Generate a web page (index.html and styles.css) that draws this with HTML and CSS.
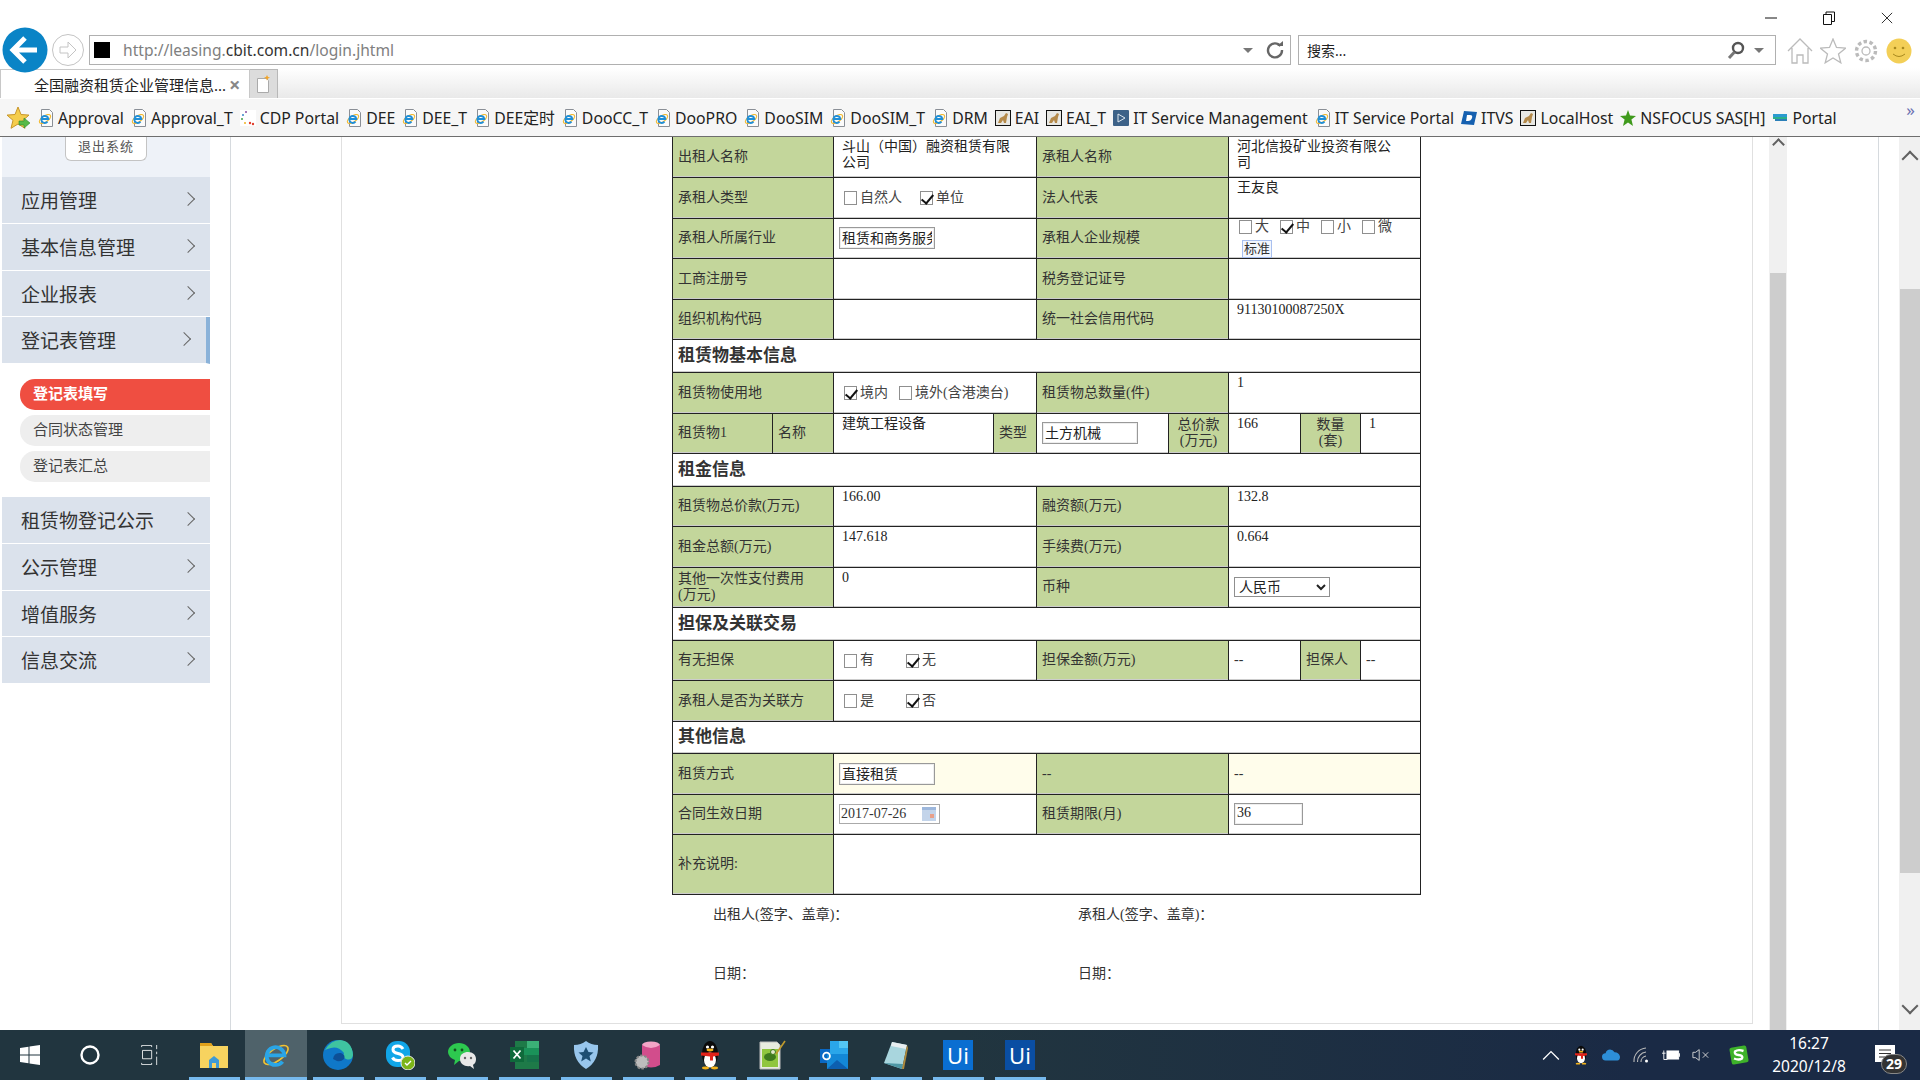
FILE: index.html
```html
<!DOCTYPE html>
<html lang="zh-CN">
<head>
    <meta charset="UTF-8">
    <title>全国融资租赁企业管理信息系统</title>
    <link rel="stylesheet" href="styles.css">
</head>
<body>
    <!-- shared icons -->
    <svg class="defs">
        <symbol id="ie" viewBox="0 0 32 32">
            <ellipse cx="16" cy="16" rx="15" ry="6.5" transform="rotate(-35 16 16)" fill="none" stroke="#f2c230" stroke-width="1.8"/>
            <path d="M8 16.5h17A9.5 9.5 0 1 0 23 23" fill="none" stroke="#2aa5e6" stroke-width="4"/>
        </symbol>
        <symbol id="iefile" viewBox="0 0 16 18">
            <path d="M3.5 .5h8l3 3v14h-11z" fill="#fbfbfb" stroke="#8a8f96"/>
            <ellipse cx="7" cy="10" rx="6.5" ry="3" transform="rotate(-35 7 10)" fill="none" stroke="#f2b92e" stroke-width="1.2"/>
            <path d="M3.8 10h6.5A3.5 3.5 0 1 0 9.5 12.7" fill="none" stroke="#1f8fd8" stroke-width="1.9"/>
        </symbol>
        <symbol id="cat" viewBox="0 0 16 16">
            <rect x=".5" y=".5" width="15" height="15" fill="#e8e8e4" stroke="#111"/>
            <path d="M3 13l2-5 4-2 2-3 2 1-1 3-1 6H9l-1-3-2 3z" fill="#b58a4a"/>
        </symbol>
        <symbol id="qq" viewBox="0 0 24 30">
            <ellipse cx="12" cy="14" rx="8" ry="13" fill="#0a0a0a"/>
            <ellipse cx="12" cy="20" rx="6" ry="7.5" fill="#fff"/>
            <circle cx="9.5" cy="7" r="1.6" fill="#fff"/><circle cx="14.5" cy="7" r="1.6" fill="#fff"/>
            <ellipse cx="12" cy="10" rx="3.4" ry="1.4" fill="#f4b31c"/>
            <path d="M3 12.5h18v3l-6 1v4h-3v-4l-9-1z" fill="#e2231a"/>
            <ellipse cx="7.5" cy="28" rx="3.5" ry="1.4" fill="#f4b31c"/><ellipse cx="16.5" cy="28" rx="3.5" ry="1.4" fill="#f4b31c"/>
        </symbol>
    </svg>

    <!-- browser frame -->
    <header class="chrome">
        <div class="window-btns">
            <svg class="win-icon" viewBox="0 0 12 14"><path d="M0 7h12" stroke="#111" fill="none"/></svg>
            <svg class="win-icon" viewBox="0 0 12 14"><path d="M.5 3.5h8v10h-8zM3 3.500V1h8.500v9.500H8.500" stroke="#111" fill="none"/></svg>
            <svg class="win-icon" viewBox="0 0 14 14"><path d="M1 1l12 12M13 1L1 13" stroke="#111" fill="none"/></svg>
        </div>
        <div class="nav-row">
            <svg class="back-btn" viewBox="0 0 46 46">
                <circle cx="23" cy="23" r="22.5" fill="#0a84c6"/>
                <path d="M11 23h24M23 11L11 23l12 12" fill="none" stroke="#fff" stroke-width="5"/>
            </svg>
            <svg class="fwd-btn" viewBox="0 0 32 32">
                <circle cx="16" cy="16" r="15.5" fill="#fff" stroke="#c4c4c4"/>
                <path d="M8 13h8V8l8 8-8 8v-5H8z" fill="none" stroke="#c4c4c4"/>
            </svg>
            <div class="address-box">
                <span class="favicon"></span>
                <span class="url">http://leasing.<b>cbit.com.cn</b>/login.jhtml</span>
                <span class="drop-arrow"></span>
                <svg class="refresh" viewBox="0 0 18 18"><path d="M14.5 5A7 7 0 1 0 16 9" fill="none" stroke="#666" stroke-width="2.4"/><path d="M11 5h6V0z" fill="#666"/></svg>
            </div>
            <div class="search-box">
                <span class="search-text">搜索...</span>
                <svg class="search-icon" viewBox="0 0 18 18"><circle cx="11" cy="7" r="5" fill="none" stroke="#555" stroke-width="2.4"/><path d="M7.5 11L2 17" stroke="#777" stroke-width="3"/></svg>
                <span class="drop-arrow"></span>
            </div>
            <div class="tools">
                <svg class="tool" viewBox="0 0 26 26"><path d="M1 13L13 1l12 12M5 10v15h5v-8h6v8h5V10" fill="none" stroke="#bbb" stroke-width="1.3"/></svg>
                <svg class="tool" viewBox="0 0 26 26"><path d="M13 1l3.500 8.500 9 .7-7 5.800 2.300 8.800-7.800-4.800-7.800 4.800L7.500 16l-7-5.800 9-.7z" fill="none" stroke="#bbb" stroke-width="1.3"/></svg>
                <svg class="tool" viewBox="0 0 26 26"><circle cx="13" cy="13" r="4" fill="none" stroke="#bbb" stroke-width="1.3"/><circle cx="13" cy="13" r="9.5" fill="none" stroke="#bbb" stroke-width="3.4" stroke-dasharray="3.5 2.5"/></svg>
                <svg class="tool" viewBox="0 0 26 26"><circle cx="13" cy="13" r="12.5" fill="#f3cf57"/><circle cx="9" cy="10" r="1.3" fill="#a8891e"/><circle cx="17" cy="10" r="1.3" fill="#a8891e"/><path d="M7 16q6 5 12 0" fill="none" stroke="#a8891e"/></svg>
            </div>
        </div>
        <div class="tab-row">
            <div class="tab"><span class="tab-title">全国融资租赁企业管理信息...</span><span class="tab-close">×</span></div>
            <div class="new-tab">
                <svg class="new-tab-icon" viewBox="0 0 14 18"><path d="M.5 3.500h9l2 2v12H.5z" fill="#fff" stroke="#aaa"/><path d="M10 0l1 2 2 .5-2 1-1 2-1-2-2-1 2-.5z" fill="#f2a52a"/></svg>
            </div>
        </div>
        <nav class="fav-bar">
            <svg class="fav-star" viewBox="0 0 24 24">
                <path d="M11 1l3 7.500 8 .6-6 5.200 2 8-7-4.300-7 4.300 2-8-6-5.200 8-.6z" fill="#f5cd4c" stroke="#c8962a"/>
                <path d="M12 15h5v-3l6 5-6 5v-3h-5z" fill="#58b947" stroke="#2f8a2a" stroke-width=".6"/>
            </svg>
            <a class="fav"><svg class="fav-icon"><use href="#iefile"/></svg>Approval</a>
            <a class="fav"><svg class="fav-icon"><use href="#iefile"/></svg>Approval_T</a>
            <a class="fav"><svg class="fav-icon" viewBox="0 0 16 16"><rect width="16" height="16" fill="#fff"/><circle cx="6" cy="2" r="1" fill="#8a4fa0"/><circle cx="3" cy="5" r="1" fill="#3a86c8"/><circle cx="2" cy="9" r="1" fill="#44a048"/><circle cx="5" cy="13" r="1" fill="#f0b020"/><circle cx="10" cy="13" r="1.2" fill="#e04030"/><circle cx="13" cy="14" r="1.2" fill="#e04030"/></svg>CDP Portal</a>
            <a class="fav"><svg class="fav-icon"><use href="#iefile"/></svg>DEE</a>
            <a class="fav"><svg class="fav-icon"><use href="#iefile"/></svg>DEE_T</a>
            <a class="fav"><svg class="fav-icon"><use href="#iefile"/></svg>DEE定时</a>
            <a class="fav"><svg class="fav-icon"><use href="#iefile"/></svg>DooCC_T</a>
            <a class="fav"><svg class="fav-icon"><use href="#iefile"/></svg>DooPRO</a>
            <a class="fav"><svg class="fav-icon"><use href="#iefile"/></svg>DooSIM</a>
            <a class="fav"><svg class="fav-icon"><use href="#iefile"/></svg>DooSIM_T</a>
            <a class="fav"><svg class="fav-icon"><use href="#iefile"/></svg>DRM</a>
            <a class="fav"><svg class="fav-icon"><use href="#cat"/></svg>EAI</a>
            <a class="fav"><svg class="fav-icon"><use href="#cat"/></svg>EAI_T</a>
            <a class="fav"><svg class="fav-icon" viewBox="0 0 16 16"><rect width="16" height="16" rx="1" fill="#3d6288"/><path d="M5 4l7 4-7 4z" fill="none" stroke="#dfe8f0"/></svg>IT Service Management</a>
            <a class="fav"><svg class="fav-icon"><use href="#iefile"/></svg>IT Service Portal</a>
            <a class="fav"><svg class="fav-icon" viewBox="0 0 16 16"><path d="M3 1l13 1-3 13L0 14z" fill="#1560b0"/><path d="M6 5h3q3 0 2 3t-4 3H5z" fill="#fff"/></svg>ITVS</a>
            <a class="fav"><svg class="fav-icon"><use href="#cat"/></svg>LocalHost</a>
            <a class="fav"><svg class="fav-icon" viewBox="0 0 16 16"><path d="M8 0l2 5.500 6 .4-4.600 3.700L13 16l-5-3.500L3 16l1.600-6.400L0 5.900l6-.4z" fill="#3f9a1c"/></svg>NSFOCUS SAS[H]</a>
            <a class="fav"><svg class="fav-icon" viewBox="0 0 16 16"><path d="M1 4h14v3H1z" fill="#2b9bd0"/><path d="M1 7h14v2H1z" fill="#2bb08a"/><path d="M3 9h12v2H3z" fill="#2b7fb8"/></svg>Portal</a>
            <span class="fav-more">»</span>
        </nav>
    </header>

    <div class="workspace">
        <!-- left menu -->
        <aside class="sidebar">
            <div class="exit-wrap"><span class="exit-btn">退出系统</span></div>
            <a class="menu-item">应用管理</a>
            <a class="menu-item">基本信息管理</a>
            <a class="menu-item">企业报表</a>
            <a class="menu-item menu-open">登记表管理</a>
            <div class="submenu">
                <a class="sub-item sub-active">登记表填写</a>
                <a class="sub-item">合同状态管理</a>
                <a class="sub-item">登记表汇总</a>
            </div>
            <a class="menu-item">租赁物登记公示</a>
            <a class="menu-item">公示管理</a>
            <a class="menu-item">增值服务</a>
            <a class="menu-item">信息交流</a>
        </aside>

        <main class="main">
            <section class="panel">
                <table class="reg-table">
                    <colgroup>
                        <col class="c100"><col class="c61"><col class="c160"><col class="c43"><col class="c132"><col class="c60"><col class="c72"><col class="c60"><col class="c60">
                    </colgroup>
                    <tr class="h40 first">
                        <td class="lab" colspan="2">出租人名称</td>
                        <td class="val" colspan="2">斗山（中国）融资租赁有限公司</td>
                        <td class="lab" colspan="2">承租人名称</td>
                        <td class="val" colspan="3">河北信投矿业投资有限公司</td>
                    </tr>
                    <tr class="h41">
                        <td class="lab" colspan="2">承租人类型</td>
                        <td class="mid" colspan="2"><div class="opts"><label class="opt"><input class="cb" type="checkbox">自然人</label><label class="opt"><input class="cb" type="checkbox" checked>单位</label></div></td>
                        <td class="lab" colspan="2">法人代表</td>
                        <td class="val" colspan="3">王友良</td>
                    </tr>
                    <tr class="h40">
                        <td class="lab" colspan="2">承租人所属行业</td>
                        <td class="mid" colspan="2"><input class="field" type="text" value="租赁和商务服务"></td>
                        <td class="lab" colspan="2">承租人企业规模</td>
                        <td class="scale" colspan="3">
                            <div class="opts opts-tight"><label class="opt"><input class="cb" type="checkbox">大</label><label class="opt"><input class="cb" type="checkbox" checked>中</label><label class="opt"><input class="cb" type="checkbox">小</label><label class="opt"><input class="cb" type="checkbox">微</label></div>
                            <span class="std-btn">标准</span>
                        </td>
                    </tr>
                    <tr class="h41">
                        <td class="lab" colspan="2">工商注册号</td>
                        <td class="val" colspan="2"></td>
                        <td class="lab" colspan="2">税务登记证号</td>
                        <td class="val" colspan="3"></td>
                    </tr>
                    <tr class="h40">
                        <td class="lab" colspan="2">组织机构代码</td>
                        <td class="val" colspan="2"></td>
                        <td class="lab" colspan="2">统一社会信用代码</td>
                        <td class="val" colspan="3">91130100087250X</td>
                    </tr>
                    <tr class="h33"><td class="section" colspan="9">租赁物基本信息</td></tr>
                    <tr class="h41">
                        <td class="lab" colspan="2">租赁物使用地</td>
                        <td class="mid" colspan="2"><div class="opts opts-tight"><label class="opt"><input class="cb" type="checkbox" checked>境内</label><label class="opt"><input class="cb" type="checkbox">境外(含港澳台)</label></div></td>
                        <td class="lab" colspan="2">租赁物总数量(件)</td>
                        <td class="val" colspan="3">1</td>
                    </tr>
                    <tr class="h40">
                        <td class="lab">租赁物1</td>
                        <td class="lab">名称</td>
                        <td class="val">建筑工程设备</td>
                        <td class="lab">类型</td>
                        <td class="mid"><input class="field" type="text" value="土方机械"></td>
                        <td class="lab lab-c">总价款<br>(万元)</td>
                        <td class="val">166</td>
                        <td class="lab lab-c">数量<br>(套)</td>
                        <td class="val">1</td>
                    </tr>
                    <tr class="h33"><td class="section" colspan="9">租金信息</td></tr>
                    <tr class="h40">
                        <td class="lab" colspan="2">租赁物总价款(万元)</td>
                        <td class="val" colspan="2">166.00</td>
                        <td class="lab" colspan="2">融资额(万元)</td>
                        <td class="val" colspan="3">132.8</td>
                    </tr>
                    <tr class="h41">
                        <td class="lab" colspan="2">租金总额(万元)</td>
                        <td class="val" colspan="2">147.618</td>
                        <td class="lab" colspan="2">手续费(万元)</td>
                        <td class="val" colspan="3">0.664</td>
                    </tr>
                    <tr class="h40">
                        <td class="lab" colspan="2">其他一次性支付费用<br>(万元)</td>
                        <td class="val" colspan="2">0</td>
                        <td class="lab" colspan="2">币种</td>
                        <td class="mid" colspan="3"><select class="picker"><option>人民币</option></select></td>
                    </tr>
                    <tr class="h33"><td class="section" colspan="9">担保及关联交易</td></tr>
                    <tr class="h40">
                        <td class="lab" colspan="2">有无担保</td>
                        <td class="mid" colspan="2"><div class="opts opts-wide"><label class="opt"><input class="cb" type="checkbox">有</label><label class="opt"><input class="cb" type="checkbox" checked>无</label></div></td>
                        <td class="lab" colspan="2">担保金额(万元)</td>
                        <td class="mid">--</td>
                        <td class="lab">担保人</td>
                        <td class="mid">--</td>
                    </tr>
                    <tr class="h41">
                        <td class="lab" colspan="2">承租人是否为关联方</td>
                        <td class="mid" colspan="7"><div class="opts opts-wide"><label class="opt"><input class="cb" type="checkbox">是</label><label class="opt"><input class="cb" type="checkbox" checked>否</label></div></td>
                    </tr>
                    <tr class="h32"><td class="section" colspan="9">其他信息</td></tr>
                    <tr class="h41 pale">
                        <td class="lab" colspan="2">租赁方式</td>
                        <td class="mid" colspan="2"><input class="field" type="text" value="直接租赁"></td>
                        <td class="lab" colspan="2">--</td>
                        <td class="mid" colspan="3">--</td>
                    </tr>
                    <tr class="h40">
                        <td class="lab" colspan="2">合同生效日期</td>
                        <td class="mid" colspan="2">
                            <span class="date-field">2017-07-26
                                <svg class="cal" viewBox="0 0 14 14"><rect width="14" height="14" fill="#c3d4ea"/><rect width="14" height="3" fill="#9db7dc"/><rect x="8" y="7" width="4" height="4" fill="#e8a08a"/></svg>
                            </span>
                        </td>
                        <td class="lab" colspan="2">租赁期限(月)</td>
                        <td class="mid" colspan="3"><input class="field field-short" type="text" value="36"></td>
                    </tr>
                    <tr class="h60">
                        <td class="lab" colspan="2">补充说明:</td>
                        <td class="val" colspan="7"></td>
                    </tr>
                </table>
                <div class="signs">
                    <span>出租人(签字、盖章)：</span>
                    <span>承租人(签字、盖章)：</span>
                    <span>日期：</span>
                    <span>日期：</span>
                </div>
            </section>
            <div class="scroll scroll-inner"><span class="chev chev-up"></span><div class="thumb"></div></div>
        </main>
        <div class="scroll scroll-outer"><span class="chev chev-up"></span><div class="thumb"></div><span class="chev chev-down"></span></div>
    </div>

    <!-- windows taskbar -->
    <footer class="taskbar">
        <div class="sys-btns">
            <svg class="sys" viewBox="0 0 20 20"><path d="M0 3l8.500-1.200v7.700H0zM9.500 1.600L20 0v9.500H9.500zM0 10.500h8.500v7.700L0 17zM9.500 10.500H20V20L9.500 18.400z" fill="#fff"/></svg>
            <svg class="sys" viewBox="0 0 20 20"><circle cx="10" cy="10" r="8.5" fill="none" stroke="#fff" stroke-width="2.4"/></svg>
            <svg class="sys" viewBox="0 0 20 24"><path d="M0 .5h12M0 23.500h12M1 6.500h11v10H1zM0 .5v2M12 .5v2M0 21.500v2M12 21.500v2M18 0v5M18 8v3M18 14v10" fill="none" stroke="#fff"/></svg>
        </div>
        <div class="task-apps">
            <div class="app run"><svg class="app-icon" viewBox="0 0 30 30"><path d="M1 3h11l2 3h15v22H1z" fill="#f7d35f"/><path d="M1 3h11l2 3H1z" fill="#e0a11a"/><path d="M10 20l5-4 5 4v8h-3v-5h-4v5h-3z" fill="#3d9ad6"/></svg></div>
            <div class="app run active"><svg class="app-icon"><use href="#ie"/></svg></div>
            <div class="app run"><svg class="app-icon" viewBox="0 0 30 30"><circle cx="15" cy="15" r="15" fill="#0f78c8"/><path d="M2 10Q8 0 17 0q12 1 13 15-1 6-7 4-4-2-2-6Q15 6 8 8q-4 1-6 2z" fill="#3fc4a0"/><path d="M10 19q1-7 8-6 5 2 3 6-3 3-7 2-2-1-4-2z" fill="#0d4f96"/></svg></div>
            <div class="app run"><svg class="app-icon" viewBox="0 0 30 30"><rect x="1" y="1" width="24" height="26" rx="11" fill="#11a6e8"/><path d="M18 9q-2-3-5-3-5 0-5 3.500 0 3 5 4 5 1 5 4t-5 3q-4 0-5.500-3" fill="none" stroke="#fff" stroke-width="3"/><circle cx="23" cy="23" r="7" fill="#7cb518" stroke="#e8e8e8"/><path d="M20 23l2 2 4-4" fill="none" stroke="#fff" stroke-width="1.4"/></svg></div>
            <div class="app run"><svg class="app-icon" viewBox="0 0 30 30"><path d="M12 3c6 0 11 4 11 9s-5 9-11 9l-5 4 1-5Q1 17 1 12c0-5 5-9 11-9z" fill="#2dc94f"/><circle cx="8" cy="10" r="1.4" fill="#13501f"/><circle cx="15" cy="10" r="1.4" fill="#13501f"/><path d="M21 12c5 0 8 3 8 7s-2 5-3 6l1 4-4-3c-5 1-10-2-10-7s4-7 8-7z" fill="#e8e8e8"/><circle cx="18" cy="18" r="1.2" fill="#666"/><circle cx="24" cy="18" r="1.2" fill="#666"/></svg></div>
            <div class="app run"><svg class="app-icon" viewBox="0 0 30 30"><rect x="6" y="1" width="24" height="28" fill="#1e7a48"/><rect x="18" y="1" width="12" height="7" fill="#3bb077"/><rect x="6" y="8" width="24" height="7" fill="#1a9259"/><rect x="18" y="15" width="12" height="7" fill="#16744a"/><rect x="1" y="7" width="14" height="15" fill="#0f6a3b"/><path d="M4.500 10.500l7 8M11.500 10.500l-7 8" stroke="#fff" stroke-width="1.8"/></svg></div>
            <div class="app run"><svg class="app-icon" viewBox="0 0 30 30"><path d="M15 1q5 4 12 4 1 16-12 24Q2 21 3 5q7 0 12-4z" fill="#98c6ec"/><path d="M15 7l2.500 5 5 .5-4 3.500 1.300 5.500-4.800-3-4.800 3 1.300-5.500-4-3.500 5-.5z" fill="#1d4f73"/></svg></div>
            <div class="app run"><svg class="app-icon" viewBox="0 0 30 30"><ellipse cx="18" cy="5" rx="9" ry="3.5" fill="#f3a5c6"/><path d="M9 5v20q9 5 18 0V5q-9 6-18 0z" fill="#d24d8c"/><circle cx="9" cy="22" r="6.5" fill="#bdbdbd" stroke="#888" stroke-width="2" stroke-dasharray="2.5 1.5"/></svg></div>
            <div class="app run"><svg class="app-icon"><use href="#qq"/></svg></div>
            <div class="app run"><svg class="app-icon" viewBox="0 0 30 30"><path d="M3 2h17l3 3v24H3z" fill="#e8ecdf" stroke="#bbb"/><rect x="5" y="9" width="16" height="18" fill="#90c63e"/><ellipse cx="13" cy="17" rx="6" ry="4" fill="#3f7a1e"/><circle cx="16" cy="12" r="2.5" fill="#dfe7c8" stroke="#3f7a1e"/><path d="M19 14L28 1" stroke="#c09b2c" stroke-width="1.6"/></svg></div>
            <div class="app run"><svg class="app-icon" viewBox="0 0 30 30"><rect x="1" y="9" width="13" height="14" fill="#0a68c4"/><rect x="11" y="1" width="18" height="13" fill="#2aa6ea"/><rect x="20" y="1" width="9" height="7" fill="#53c6f4"/><path d="M8 14h21v15H8z" fill="#1387d6"/><path d="M8 29l10-9 11 9z" fill="#0d5fb0"/><circle cx="7.5" cy="16" r="3.4" fill="none" stroke="#fff" stroke-width="1.8"/></svg></div>
            <div class="app run"><svg class="app-icon" viewBox="0 0 30 30"><path d="M11 2l15 3-5 24L3 23z" fill="#a9d6de"/><path d="M11 2l15 3-1 4-15-3z" fill="#e8eef0"/><path d="M3 23l18 6 1-5z" fill="#4f97a5"/><path d="M26 5l1 3-4 21-2 0z" fill="#b08b3c"/></svg></div>
            <div class="app run"><span class="ui-logo">Ui</span></div>
            <div class="app run"><span class="ui-logo ui-dark">Ui</span></div>
        </div>
        <div class="tray">
            <svg class="tray-icon" viewBox="0 0 16 10"><path d="M1 9l7-7 7 7" fill="none" stroke="#fff" stroke-width="1.2"/></svg>
            <svg class="tray-icon tray-tall"><use href="#qq"/></svg>
            <svg class="tray-icon" viewBox="0 0 20 12"><path d="M4 12a4 4 0 0 1 0-8q1-4 5-4 3 0 5 3 5 0 6 5 0 4-3 4z" fill="#2d8fd8"/></svg>
            <svg class="tray-icon" viewBox="0 0 16 16"><path d="M1 15A13 13 0 0 1 13 1M4.500 15A9.500 9.500 0 0 1 13 5M8 15A6 6 0 0 1 13 9" fill="none" stroke="#bbb" stroke-width="1.1"/><circle cx="13.5" cy="14" r="1.5" fill="#fff"/></svg>
            <svg class="tray-icon" viewBox="0 0 20 14"><rect x="5.5" y="2.500" width="13" height="9" fill="#fff" stroke="#fff"/><path d="M0 5h4M2 2v5M2 7v5h4" fill="none" stroke="#fff"/><path d="M19 5h1v4h-1z" fill="#fff"/></svg>
            <svg class="tray-icon" viewBox="0 0 20 14"><path d="M1 4h3l4-3v12l-4-3H1z" fill="none" stroke="#ddd"/><path d="M12 4l6 6M18 4l-6 6" stroke="#ddd"/></svg>
            <svg class="tray-icon tray-sogou" viewBox="0 0 20 20"><rect x="1.5" y="1.500" width="17" height="17" rx="2" transform="rotate(-10 10 10)" fill="#3eb22a"/><path d="M14.500 6Q9 4 6 6.500q-1 3 3.500 3.500 5 .5 3.500 3.500-3 2-8 0" fill="none" stroke="#fff" stroke-width="2.4"/></svg>
        </div>
        <div class="clock"><span>16:27</span><span>2020/12/8</span></div>
        <div class="notify">
            <svg class="notify-icon" viewBox="0 0 20 17"><path d="M0 0h20v17H0z" fill="#fff"/><path d="M4 5h12M4 8.500h12M4 12h12" stroke="#333"/></svg>
            <span class="badge">29</span>
        </div>
    </footer>
</body>
</html>
```

FILE: styles.css
```css
* {
    box-sizing: border-box;
}

html, body {
    height: 100%;
}

body {
    margin: 0;
    width: 1920px;
    height: 1080px;
    overflow: hidden;
    display: flex;
    flex-direction: column;
    background-color: #fff;
    color: #333;
    font-family: "Liberation Serif", "Noto Sans CJK SC", serif;
}

.defs {
    display: none;
}

/* Browser frame */
.chrome {
    height: 137px;
    flex-shrink: 0;
    position: relative;
    background: linear-gradient(#fff 68px, #e9e9e9 98px);
    font-family: "Noto Sans", "Noto Sans CJK SC", sans-serif;
    color: #222;
}

.window-btns {
    position: absolute;
    top: 11px;
    right: 27px;
    display: flex;
    gap: 46px;
}

.win-icon {
    width: 12px;
    height: 14px;
}

.nav-row {
    height: 68px;
    padding: 27px 0 0 2px;
    display: flex;
    align-items: flex-start;
}

.back-btn {
    width: 46px;
    height: 46px;
    position: relative;
    z-index: 1;
}

.fwd-btn {
    width: 32px;
    height: 32px;
    margin: 7px 0 0 4px;
}

.address-box {
    width: 1202px;
    height: 30px;
    margin: 8px 0 0 5px;
    padding: 0 6px 0 4px;
    background-color: #fff;
    border: 1px solid #b0b0b0;
    display: flex;
    align-items: center;
}

.favicon {
    width: 16px;
    height: 16px;
    background-color: #000;
}

.url {
    margin-left: 13px;
    flex: 1;
    font-size: 15.6px;
    color: #808080;
}

.url b {
    font-weight: normal;
    color: #333;
}

.drop-arrow {
    width: 0;
    height: 0;
    border-left: 5px solid transparent;
    border-right: 5px solid transparent;
    border-top: 5px solid #777;
}

.refresh {
    width: 18px;
    height: 18px;
    margin-left: 13px;
}

.search-box {
    width: 478px;
    height: 30px;
    margin: 8px 0 0 7px;
    padding: 0 11px 0 8px;
    background-color: #fff;
    border: 1px solid #b0b0b0;
    display: flex;
    align-items: center;
}

.search-text {
    flex: 1;
    font-size: 14px;
}

.search-icon {
    width: 18px;
    height: 18px;
    margin-right: 9px;
}

.tools {
    margin: 11px 0 0 11px;
    display: flex;
    gap: 7px;
}

.tool {
    width: 26px;
    height: 26px;
}

.tab-row {
    height: 30px;
    display: flex;
    align-items: flex-end;
}

.tab {
    width: 250px;
    height: 29px;
    padding-left: 33px;
    background-color: #fff;
    border: 1px solid #c8c8c8;
    border-bottom: none;
    display: flex;
    align-items: center;
    font-size: 15px;
}

.tab-title {
    width: 195px;
    white-space: nowrap;
}

.tab-close {
    font-size: 20px;
    font-weight: bold;
    color: #888;
}

.new-tab {
    width: 28px;
    height: 29px;
    background-color: #dcdcdc;
    border: 1px solid #b8b8b8;
    border-left: none;
    border-bottom: none;
    display: flex;
    align-items: center;
    justify-content: center;
}

.new-tab-icon {
    width: 14px;
    height: 18px;
}

.fav-bar {
    height: 39px;
    padding-left: 7px;
    background-color: #f6f6f6;
    border-top: 1px solid #fff;
    border-bottom: 1px solid #6e6e6e;
    display: flex;
    align-items: center;
    gap: 7px;
    position: relative;
    font-size: 15.8px;
    white-space: nowrap;
}

.fav-star {
    width: 24px;
    height: 24px;
}

.fav {
    display: flex;
    align-items: center;
    gap: 4px;
}

.fav-icon {
    width: 16px;
    height: 18px;
}

.fav-more {
    position: absolute;
    top: 0;
    right: 5px;
    font-size: 17px;
    line-height: 22px;
    color: #6a6fb0;
}

/* Page area */
.workspace {
    flex: 1;
    min-height: 0;
    display: flex;
    align-items: stretch;
}

.sidebar {
    width: 208px;
    margin-left: 2px;
    align-self: flex-start;
    font-family: "Noto Sans CJK SC", sans-serif;
}

.exit-wrap {
    height: 40px;
    padding-left: 63px;
    background-color: #eef2f8;
}

.exit-btn {
    display: block;
    width: 82px;
    height: 24px;
    background-color: #fff;
    border: 1px solid #c4c4c4;
    border-top: none;
    border-radius: 0 0 6px 6px;
    text-align: center;
    font-size: 13px;
    line-height: 18px;
    letter-spacing: 1px;
    color: #555;
}

.menu-item {
    display: block;
    height: 46.75px;
    padding-left: 19px;
    background-color: #dbe2ec;
    border-bottom: 1px solid #fff;
    position: relative;
    font-size: 19px;
    line-height: 46px;
    color: #333;
}

.menu-item::after {
    content: "";
    position: absolute;
    top: 17px;
    right: 17px;
    width: 9px;
    height: 9px;
    border-top: 1.5px solid #666;
    border-right: 1.5px solid #666;
    transform: rotate(45deg);
}

.menu-open {
    border-right: 4px solid #8ab2d9;
}

.submenu {
    height: 133px;
    padding: 15px 0 0 18px;
    background-color: #fff;
    display: flex;
    flex-direction: column;
    gap: 5px;
}

.sub-item {
    height: 31px;
    padding-left: 13px;
    background-color: #eee;
    border-radius: 15px 0 0 15px;
    font-size: 15px;
    line-height: 28px;
    color: #444;
}

.sub-active {
    background-color: #ef4e41;
    color: #fff;
    font-weight: bold;
}

.main {
    flex: 1;
    margin-left: 20px;
    padding-left: 110px;
    border-left: 1px solid #d6dade;
    border-right: 1px solid #d6dade;
    display: flex;
    gap: 16px;
}

.panel {
    width: 1412px;
    margin-bottom: 6px;
    padding-left: 330px;
    border: 1px solid #e0e0e0;
    border-top: none;
}

/* Registration form */
.reg-table {
    width: 748px;
    table-layout: fixed;
    border-collapse: collapse;
    font-size: 14px;
    line-height: 16px;
}

.c100 { width: 100px; }
.c61 { width: 61px; }
.c160 { width: 160px; }
.c43 { width: 43px; }
.c132 { width: 132px; }
.c60 { width: 60px; }
.c72 { width: 72px; }

.h32 { height: 32px; }
.h33 { height: 33px; }
.h40 { height: 40px; }
.h41 { height: 41px; }
.h60 { height: 60px; }

.reg-table td {
    padding: 0;
    border: 1px solid #222;
    box-shadow: inset 0 -1px 0 #ccc;
}

.first td {
    border-top: none;
}

.reg-table .lab {
    padding: 0 4px 0 5px;
    background-color: #c3d69b;
    vertical-align: middle;
}

.reg-table .lab-c {
    padding: 0 4px;
    text-align: center;
}

.reg-table .val {
    padding: 2px 20px 0 8px;
    vertical-align: top;
    color: #222;
}

.reg-table .mid {
    padding: 0 5px;
    vertical-align: middle;
    color: #333;
}

.reg-table .scale {
    padding: 0 5px;
    vertical-align: top;
}

.reg-table .section {
    padding: 0 5px;
    font-size: 17px;
    font-weight: bold;
    color: #333;
}

.pale .mid {
    background-color: #fffdeb;
}

.opts {
    padding-left: 5px;
    display: flex;
    gap: 18px;
    color: #444;
}

.opts-tight {
    gap: 11px;
}

.opts-wide {
    gap: 32px;
}

.opt {
    display: flex;
    align-items: center;
    gap: 3px;
}

.cb {
    appearance: none;
    width: 13px;
    height: 14px;
    margin: 1px 0 0;
    background-color: #fff;
    border: 1px solid #8f8f8f;
    position: relative;
}

.cb:checked::after {
    content: "";
    position: absolute;
    left: 3px;
    top: 0;
    width: 5px;
    height: 10px;
    border-right: 2px solid #111;
    border-bottom: 2px solid #111;
    transform: rotate(40deg);
}

.field {
    display: block;
    width: 96px;
    height: 22px;
    padding: 0 2px 2px;
    background-color: #fff;
    border: 1px solid #999;
    box-shadow: inset 0 0 0 1px #eee;
    font: inherit;
    color: #222;
}

.field-short {
    width: 69px;
}

.std-btn {
    display: block;
    width: 30px;
    height: 18px;
    margin: 5px 0 0 8px;
    background-color: #f2f6fd;
    border: 1px solid #a9c0ef;
    text-align: center;
    font-size: 13px;
    line-height: 16px;
}

.picker {
    display: block;
    width: 96px;
    height: 20px;
    padding: 0;
    background-color: #fff;
    border: 1px solid #8f8f8f;
    border-radius: 0;
    font: inherit;
    color: #222;
}

.date-field {
    width: 101px;
    height: 20px;
    padding: 0 3px 0 1px;
    background-color: #fff;
    border: 1px solid #aaa;
    display: flex;
    align-items: center;
    justify-content: space-between;
}

.cal {
    width: 14px;
    height: 14px;
}

.signs {
    width: 748px;
    padding-left: 41px;
    display: grid;
    grid-template-columns: 365px 1fr;
    grid-auto-rows: 59px;
    font-size: 14px;
    line-height: 40px;
    color: #333;
}

/* Scrollbars */
.scroll {
    background-color: #f0f0f0;
    display: flex;
    flex-direction: column;
    align-items: center;
    flex-shrink: 0;
}

.scroll-inner {
    width: 18px;
    padding-top: 3px;
}

.scroll-outer {
    width: 21px;
    margin-left: 20px;
    padding: 16px 0 18px;
}

.scroll .thumb {
    background-color: #cdcdcd;
}

.scroll-inner .thumb {
    width: 16px;
    flex: 1;
    margin-top: 124px;
}

.scroll-outer .thumb {
    width: 20px;
    height: 584px;
    margin: 124px 0 127px;
}

.chev {
    width: 9px;
    height: 9px;
    border-top: 2.5px solid #606060;
    border-left: 2.5px solid #606060;
    flex-shrink: 0;
}

.chev-up {
    transform: rotate(45deg);
}

.chev-down {
    transform: rotate(225deg);
}

.scroll-outer .chev {
    width: 12px;
    height: 12px;
}

/* Taskbar */
.taskbar {
    height: 50px;
    flex-shrink: 0;
    background: linear-gradient(90deg, #21353f 0, #21353f 50%, #1a2a45 85%);
    display: flex;
    align-items: stretch;
    color: #fff;
    font-family: "Noto Sans", sans-serif;
}

.sys-btns {
    width: 183px;
    padding-left: 20px;
    display: flex;
    align-items: center;
    gap: 40px;
}

.sys {
    width: 20px;
    height: 20px;
}

.task-apps {
    display: flex;
}

.app {
    width: 62px;
    position: relative;
    display: flex;
    align-items: center;
    justify-content: center;
}

.app-icon {
    width: 30px;
    height: 30px;
}

.run::after {
    content: "";
    position: absolute;
    left: 6px;
    right: 5px;
    bottom: 0;
    height: 3px;
    background-color: #76b9ed;
}

.active {
    background-color: #4f626a;
}

.active::after {
    left: 0;
    right: 0;
}

.ui-logo {
    width: 30px;
    height: 30px;
    background-color: #0a6ed1;
    text-align: center;
    font-size: 22px;
    line-height: 30px;
}

.ui-dark {
    background-color: #0a4ea3;
}

.tray {
    margin-left: 491px;
    display: flex;
    align-items: center;
    gap: 12px;
}

.tray-icon {
    width: 18px;
    height: 16px;
}

.tray-tall {
    height: 20px;
}

.tray-sogou {
    width: 20px;
    height: 20px;
    margin-left: 7px;
}

.clock {
    width: 100px;
    margin-left: 10px;
    padding-top: 2px;
    display: flex;
    flex-direction: column;
    align-items: center;
    font-size: 15.5px;
    line-height: 23px;
}

.notify {
    margin-left: 16px;
    position: relative;
    padding-top: 15px;
}

.notify-icon {
    display: block;
    width: 20px;
    height: 17px;
}

.badge {
    position: absolute;
    top: 24px;
    left: 6px;
    width: 26px;
    height: 20px;
    background-color: #333;
    border: 1px solid #888;
    border-radius: 10px;
    text-align: center;
    font-size: 14px;
    font-weight: bold;
    line-height: 18px;
}
```
